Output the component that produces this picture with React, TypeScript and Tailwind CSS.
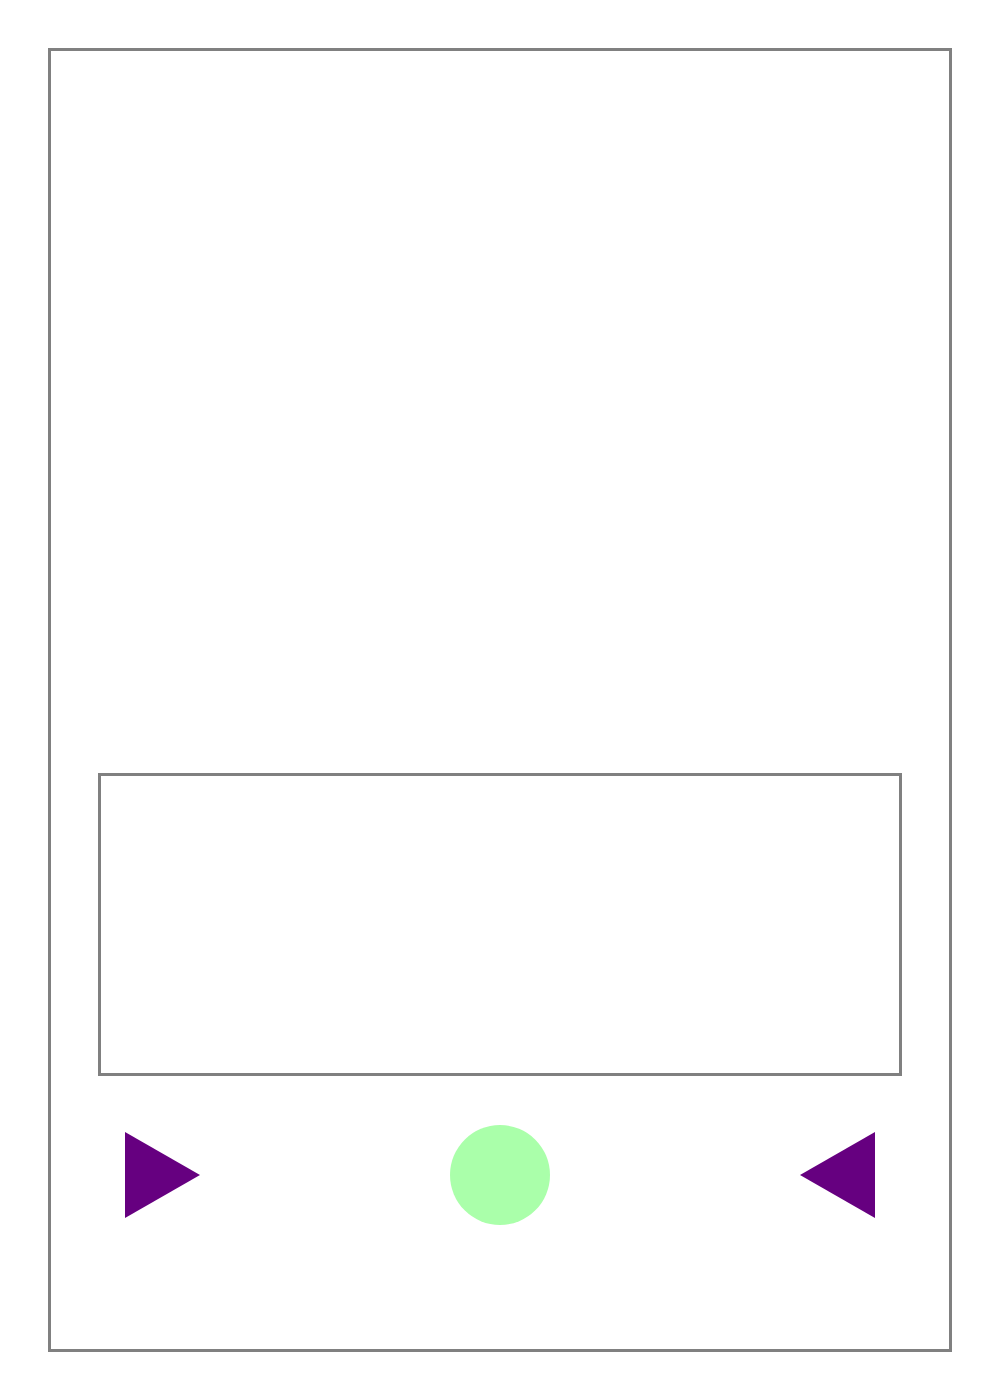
export default function App() {
  return (
    <div className="w-[1000px] h-[1400px] bg-white pt-[48px] pl-[48px]">
      <div className="w-[904px] h-[1304px] border-[3px] border-[#808080] px-[47px] pt-[722px]">
        {/* inner panel */}
        <div className="w-[804px] h-[303px] border-[3px] border-[#808080]" />

        {/* controls row */}
        <div className="mt-[49px] mx-[27px] w-[750px] h-[100px] flex items-center justify-between">
          <svg width="75" height="86" viewBox="0 0 75 86">
            <polygon points="0,0 75,43 0,86" fill="#660080" />
          </svg>
          <div className="w-[100px] h-[100px] rounded-full bg-[#aaffaa]" />
          <svg width="75" height="86" viewBox="0 0 75 86">
            <polygon points="75,0 0,43 75,86" fill="#660080" />
          </svg>
        </div>
      </div>
    </div>
  );
}
